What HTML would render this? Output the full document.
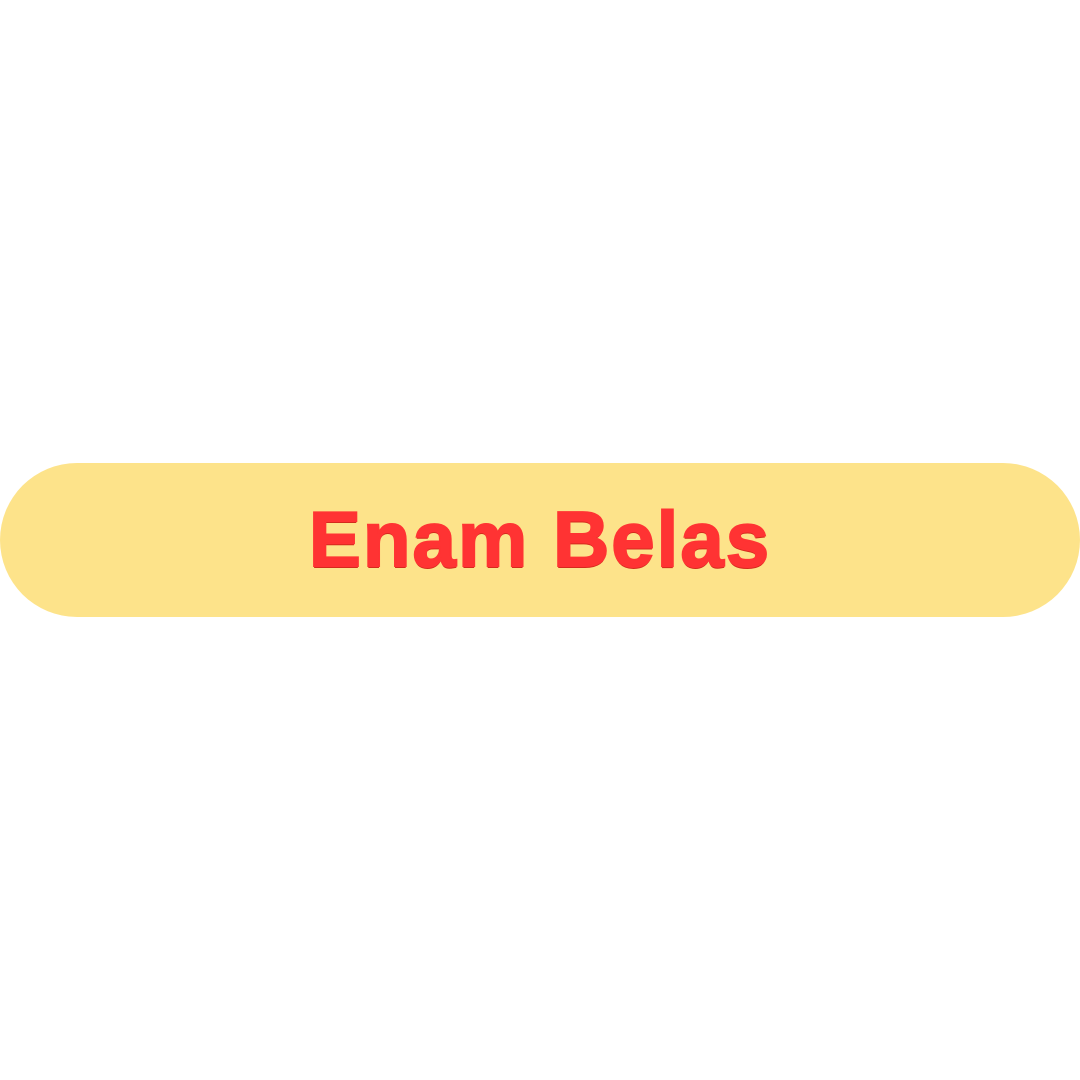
<!DOCTYPE html>
<html><head><style>
html,body{margin:0;padding:0;width:1080px;height:1080px;background:#fff;overflow:hidden}
.pill{position:absolute;left:0;top:463px;width:1080px;height:154px;background:#FDE38A;border-radius:77px}
.t{position:absolute;left:0;width:1080px;top:489px;text-align:center;font-family:"Liberation Sans",sans-serif;font-weight:bold;font-size:78px;line-height:100px;color:#FF3333;letter-spacing:2px;-webkit-text-stroke:2px #FF3333;text-shadow:0 2px 0 #d42a1c}
</style></head><body>
<div class="pill"></div>
<div class="t">Enam Belas</div>
</body></html>
